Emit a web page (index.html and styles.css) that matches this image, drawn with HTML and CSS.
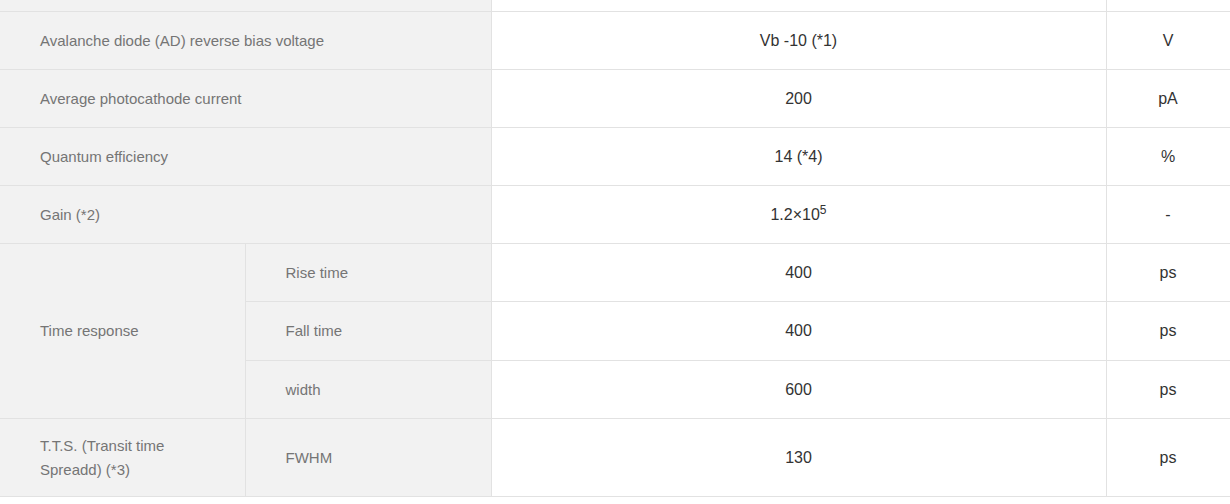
FILE: index.html
```html
<!DOCTYPE html>
<html>
<head>
<meta charset="utf-8">
<link rel="stylesheet" href="styles.css">
</head>
<body>
<table class="spec">
  <colgroup>
    <col class="c-label">
    <col class="c-sub">
    <col class="c-value">
    <col class="c-unit">
  </colgroup>
  <tbody>
    <tr class="r-cut">
      <th colspan="2"></th>
      <td class="val"></td>
      <td class="unit"></td>
    </tr>
    <tr>
      <th colspan="2">Avalanche diode (AD) reverse bias voltage</th>
      <td class="val">Vb -10 (*1)</td>
      <td class="unit">V</td>
    </tr>
    <tr>
      <th colspan="2">Average photocathode current</th>
      <td class="val">200</td>
      <td class="unit">pA</td>
    </tr>
    <tr>
      <th colspan="2">Quantum efficiency</th>
      <td class="val">14 (*4)</td>
      <td class="unit">%</td>
    </tr>
    <tr>
      <th colspan="2">Gain (*2)</th>
      <td class="val">1.2×10<sup>5</sup></td>
      <td class="unit">-</td>
    </tr>
    <tr>
      <th rowspan="3">Time response</th>
      <th class="sub">Rise time</th>
      <td class="val">400</td>
      <td class="unit">ps</td>
    </tr>
    <tr class="r-mid">
      <th class="sub">Fall time</th>
      <td class="val">400</td>
      <td class="unit">ps</td>
    </tr>
    <tr>
      <th class="sub">width</th>
      <td class="val">600</td>
      <td class="unit">ps</td>
    </tr>
    <tr class="r-tall">
      <th>T.T.S. (Transit time Spreadd) (*3)</th>
      <th class="sub">FWHM</th>
      <td class="val">130</td>
      <td class="unit">ps</td>
    </tr>
  </tbody>
</table>
</body>
</html>
```

FILE: styles.css
```css
html, body {
  margin: 0;
  padding: 0;
  background: #fff;
}

.spec {
  width: 1230px;
  border-collapse: collapse;
  table-layout: fixed;
  font-family: "Liberation Sans", Arial, sans-serif;
}

.c-label { width: 245px; }
.c-sub { width: 246px; }
.c-value { width: 615px; }
.c-unit { width: 124px; }

.spec th,
.spec td {
  border: 1px solid #e2e2e2;
  height: 57px;
  padding: 0;
  vertical-align: middle;
}

.spec th {
  background: #f2f2f2;
  color: #757575;
  font-size: 15px;
  font-weight: normal;
  text-align: left;
  padding-left: 40px;
  padding-right: 40px;
  line-height: 24px;
}

.spec td {
  color: #333;
  font-size: 16px;
  text-align: center;
}

.spec tr:first-child th,
.spec tr:first-child td {
  border-top: none;
}

.spec .r-cut th,
.spec .r-cut td {
  height: 11px;
}

.spec .r-mid th,
.spec .r-mid td {
  height: 58px;
}

.spec .r-tall th,
.spec .r-tall td {
  height: 77px;
}

.spec th:first-child {
  border-left: none;
}

.spec sup {
  font-size: 12px;
  line-height: 0;
  vertical-align: 6px;
}
```
